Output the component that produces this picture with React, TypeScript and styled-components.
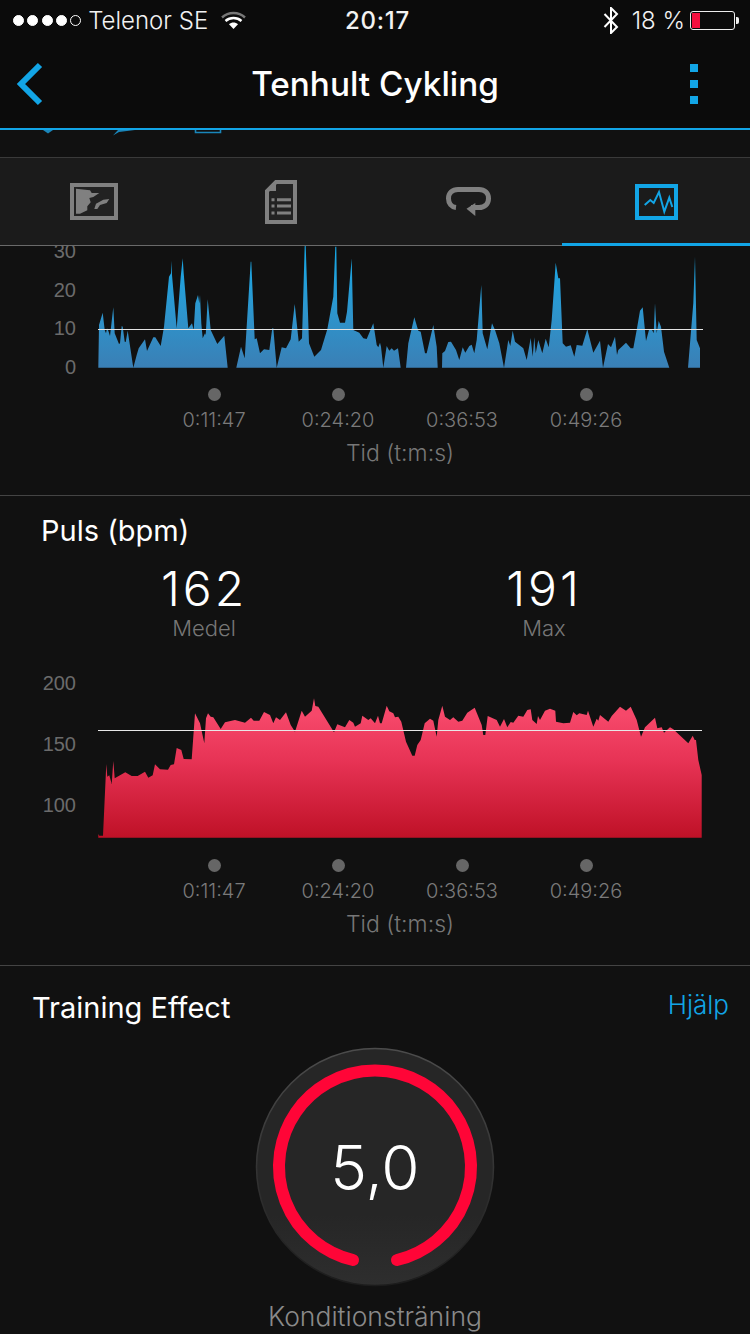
import React from "react";
import styled, { createGlobalStyle } from "styled-components";

const SANS = `"Liberation Sans", Arial, sans-serif`;
const UI = `Inter, "Liberation Sans", sans-serif`;

const Global = createGlobalStyle`
  html, body { margin: 0; padding: 0; background: #111; }
  body { font-family: ${UI}; }
  #root { width: 750px; height: 1334px; overflow: hidden; }
`;

const Page = styled.div`
  width: 750px;
  height: 1334px;
  overflow: hidden;
  background: #111;
  color: #fff;
`;

const Header = styled.header`
  height: 128px;
  background: #0b0b0b;
  border-bottom: 2px solid #12a5e6;
`;

const StatusBar = styled.div`
  height: 40px;
  display: grid;
  grid-template-columns: 1fr auto 1fr;
  align-items: center;
  padding: 0 11px 0 13px;
  font-size: 24px;
  color: #f2f2f2;
`;

const StatusLeft = styled.div`
  display: flex;
  align-items: center;
`;

const StatusRight = styled.div`
  display: flex;
  align-items: center;
  justify-content: flex-end;
`;

const Signal = styled.div`
  display: flex;
  gap: 3.3px;
  margin-right: 7px;
`;

const Dot = styled.span<{ $off?: boolean }>`
  width: 11px;
  height: 11px;
  box-sizing: border-box;
  border-radius: 50%;
  border: 1px solid #fff;
  background: ${(p) => (p.$off ? "transparent" : "#fff")};
`;

const Carrier = styled.span`
  margin-right: 13px;
  font-weight: 300;
`;

const Clock = styled.span`
  font-weight: 500;
  letter-spacing: 0.8px;
  margin-left: 3px;
`;

const Percent = styled.span`
  margin: 0 5px 0 13px;
  font-weight: 300;
`;

const Battery = styled.div`
  position: relative;
  width: 45px;
  height: 19px;
  box-sizing: border-box;
  border: 1px solid #eee;
  border-radius: 3px;
  margin-right: 4px;
  padding: 1px;
  &::after {
    content: "";
    position: absolute;
    right: -5px;
    top: 5px;
    width: 3px;
    height: 7px;
    background: #eee;
    border-radius: 0 2px 2px 0;
  }
`;

const BatteryFill = styled.div`
  width: 8px;
  height: 100%;
  background: #f5103f;
`;

const NavBar = styled.div`
  height: 88px;
  display: grid;
  grid-template-columns: 100px 1fr 100px;
  align-items: center;
`;

const BackIcon = styled.svg`
  margin-left: 15px;
  display: block;
`;

const Title = styled.h1`
  margin: 0;
  text-align: center;
  font-size: 33.3px;
  font-weight: 500;
`;

const Kebab = styled.div`
  justify-self: end;
  margin-right: 52px;
  display: flex;
  flex-direction: column;
  gap: 8px;
`;

const KebabDot = styled.span`
  width: 8px;
  height: 8px;
  background: #12a5e6;
`;

const ScrolledStrip = styled.svg`
  display: block;
  height: 27px;
  width: 750px;
`;

const Tabs = styled.nav`
  height: 87px;
  display: grid;
  grid-template-columns: repeat(4, 1fr);
  background: #1b1b1b;
  border-top: 1px solid #3a3a3a;
  border-bottom: 1px solid #6a6a6a;
`;

const Tab = styled.div<{ $active?: boolean }>`
  display: flex;
  align-items: center;
  justify-content: center;
  position: relative;
  ${(p) =>
    p.$active
      ? `&::after { content: ""; position: absolute; left: -1px; right: 0; bottom: -1px; height: 3px; background: #12a5e6; }`
      : ""}
`;

const Section = styled.section<{ $height: number }>`
  height: ${(p) => p.$height}px;
  box-sizing: border-box;
  border-bottom: 1px solid #444;
  overflow: hidden;
`;

const ChartRow = styled.div`
  display: flex;
  align-items: flex-start;
`;

const YAxis = styled.div<{ $height: number; $top: number }>`
  width: 76px;
  height: ${(p) => p.$height}px;
  margin-top: ${(p) => p.$top}px;
  margin-right: 22px;
  display: flex;
  flex-direction: column;
  justify-content: space-between;
  align-items: flex-end;
  font-family: ${SANS};
  font-size: 20px;
  line-height: 20px;
  color: #6b6b6b;
`;

const Plot = styled.svg`
  display: block;
`;

const Ticks = styled.div<{ $top: number }>`
  display: grid;
  grid-template-columns: repeat(4, 124px);
  padding-left: 152px;
  margin-top: ${(p) => p.$top}px;
`;

const Tick = styled.div`
  display: flex;
  flex-direction: column;
  align-items: center;
  font-weight: 300;
  font-size: 20px;
  line-height: 24px;
  color: #7a7a7a;
`;

const TickDot = styled.span`
  width: 13px;
  height: 13px;
  border-radius: 50%;
  background: #666;
  margin-bottom: 7px;
`;

const AxisTitle = styled.div`
  margin-top: 8px;
  padding-left: 50px;
  text-align: center;
  font-size: 23px;
  font-weight: 300;
  line-height: 26px;
  color: #777;
`;

const SectionTitle = styled.h2<{ $left: number }>`
  margin: 0;
  padding-left: ${(p) => p.$left}px;
  font-size: 29px;
  font-weight: 400;
  color: #fff;
`;

const PulsHead = styled.div`
  padding-top: 17px;
  height: 174px;
  box-sizing: border-box;
`;

const Stats = styled.div`
  display: grid;
  grid-template-columns: 340px 340px;
  padding-left: 34px;
  margin-top: 14px;
`;

const Stat = styled.div`
  text-align: center;
`;

const StatValue = styled.div`
  font-weight: 300;
  font-size: 48px;
  letter-spacing: 3px;
  line-height: 54px;
`;

const StatLabel = styled.div`
  font-size: 22px;
  font-weight: 300;
  line-height: 24px;
  color: #777;
`;

const TrainingHead = styled.div`
  display: flex;
  justify-content: space-between;
  align-items: flex-start;
  padding: 24px 21px 0 0;
`;

const Help = styled.span`
  font-size: 26px;
  font-weight: 300;
  color: #12a5e6;
  margin-top: -1px;
`;

const GaugeWrap = styled.div`
  position: relative;
  width: 240px;
  height: 240px;
  margin: 22px auto 0;
  display: flex;
  align-items: center;
  justify-content: center;
`;

const GaugeSvg = styled.svg`
  position: absolute;
  inset: 0;
`;

const GaugeValue = styled.span`
  position: relative;
  font-weight: 300;
  font-size: 62px;
`;

const GaugeLabel = styled.div`
  margin-top: 13px;
  text-align: center;
  font-size: 26.5px;
  font-weight: 300;
  color: #8a8a8a;
`;

type P = [number, number];

const blueA: P[] = [[175,383],[177,255],[188,218],[194,270],[198,280],[201,265],[205,272],[210,288],[220,202],[224,280],[237,312],[240,310],[245,258],[248,260],[254,305],[257,306],[263,272],[280,383],[290,345],[296,325],[315,298],[321,333],[340,292],[346,292],[362,318],[372,260],[387,110],[393,100],[395,62],[396,105],[410,265],[422,110],[428,55],[431,100],[445,265],[456,250],[461,270],[466,190],[474,165],[478,190],[480,165],[484,250],[488,295],[495,280],[497,285],[503,178],[512,270],[532,312],[553,287],[563,383],[589,383],[603,320],[614,355],[632,65],[634,65],[644,298],[650,295],[660,340],[672,328],[688,330],[697,265],[700,265],[710,383],[725,322],[738,325],[752,298],[764,192],[776,305],[786,295],[794,18],[797,18],[807,310],[823,350],[843,330],[862,268],[880,170],[886,20],[889,20],[892,220],[900,248],[915,248],[921,215],[935,55],[940,270],[958,278],[970,295],[980,297],[1000,250],[1010,315],[1015,322]];
const blueB: P[] = [[0,308],[3,320],[10,383],[20,318],[28,332],[35,325],[42,332],[54,325],[62,383],[78,383],[85,310],[103,232],[115,272],[122,275],[135,340],[140,340],[160,255],[170,320],[173,383],[186,383],[187,340],[195,333],[205,306],[213,305],[228,330],[238,360],[248,322],[256,338],[268,318],[275,314],[283,340],[290,300],[304,135],[308,280],[322,328],[336,250],[345,270],[358,310],[372,383],[385,300],[391,318],[398,272],[405,305],[430,325],[440,360],[452,294],[458,350],[463,292],[467,340],[475,300],[487,340],[497,296],[506,322],[515,240],[527,68],[535,115],[540,115],[548,310],[558,320],[572,316],[583,350],[590,315],[607,317],[622,268],[640,338],[660,302],[669,383],[684,312],[693,322],[705,290],[711,345],[715,330],[738,308],[752,325],[760,325],[770,270],[780,212],[788,202],[798,303],[807,270],[815,268],[821,280],[825,190],[830,280],[836,243],[843,260],[852,335],[868,383],[924,383],[940,190],[945,50],[950,300],[960,325],[960,383]];
const redA: P[] = [[175,503],[175,492],[178,497],[189,497],[199,282],[202,320],[208,316],[215,342],[220,273],[224,325],[256,307],[275,318],[293,318],[315,305],[325,323],[338,316],[345,283],[360,298],[384,299],[392,285],[402,283],[410,234],[424,240],[431,267],[455,268],[465,130],[480,160],[493,220],[498,145],[504,130],[512,140],[520,142],[542,177],[555,157],[585,150],[615,158],[633,143],[641,152],[658,152],[672,126],[690,135],[700,160],[708,142],[720,150],[738,127],[752,165],[765,185],[785,122],[795,140],[815,122],[822,85],[826,108],[835,110],[882,187],[892,163],[915,172],[928,150],[940,158],[945,170],[962,160],[967,137],[985,150],[992,145],[1005,160],[1014,137],[1020,160]];
const redB: P[] = [[5,160],[20,107],[28,124],[40,130],[45,142],[55,140],[64,155],[78,215],[97,257],[104,257],[112,225],[122,210],[134,160],[150,146],[160,152],[170,200],[175,150],[187,107],[195,140],[210,150],[220,142],[235,155],[247,152],[262,128],[284,113],[305,165],[310,195],[316,195],[323,138],[350,150],[360,170],[372,147],[382,172],[392,156],[400,158],[415,137],[430,140],[442,120],[452,118],[457,150],[470,162],[474,138],[480,150],[495,122],[510,116],[526,122],[528,155],[550,160],[570,158],[580,126],[590,136],[598,130],[620,135],[624,122],[640,170],[650,146],[655,152],[660,135],[685,155],[695,138],[720,110],[738,122],[752,110],[770,150],[783,200],[795,172],[825,143],[832,175],[845,172],[852,188],[870,172],[880,178],[925,220],[938,197],[944,210],[948,210],[955,270],[965,315],[965,503]];

const toPath = (a: P[], b: P[], originY: number, plotTop: number) => {
  const pts = [
    ...a.map(([x, y]): P => [x / 3 + 40 - 98, y / 3 + originY - plotTop]),
    ...b.map(([x, y]): P => [x / 3 + 380 - 98, y / 3 + originY - plotTop]),
  ];
  return "M" + pts.map(([x, y]) => `${x.toFixed(1)} ${y.toFixed(1)}`).join("L") + "Z";
};

const bluePath = toPath(blueA, blueB, 240, 246);
const redPath = toPath(redA, redB, 670, 670);
const TIMES = ["0:11:47", "0:24:20", "0:36:53", "0:49:26"];

const TimeAxis = ({ top }: { top: number }) => (
  <>
    <Ticks $top={top}>
      {TIMES.map((t) => (
        <Tick key={t}>
          <TickDot />
          {t}
        </Tick>
      ))}
    </Ticks>
    <AxisTitle>Tid (t:m:s)</AxisTitle>
  </>
);

export default function App() {
  return (
    <Page>
      <Global />
      <Header>
        <StatusBar>
          <StatusLeft>
            <Signal>
              <Dot />
              <Dot />
              <Dot />
              <Dot />
              <Dot $off />
            </Signal>
            <Carrier>Telenor SE</Carrier>
            <svg width="25" height="18" viewBox="0 0 25 18">
              <path d="M1 6.5C7.5 .5 17.5 .5 24 6.5" fill="none" stroke="#777" strokeWidth="2.4" />
              <path d="M4.5 10C9 6 16 6 20.5 10" fill="none" stroke="#fff" strokeWidth="2.4" />
              <path d="M8 13.2C10.6 11 14.4 11 17 13.2L12.5 18Z" fill="#fff" />
            </svg>
          </StatusLeft>
          <Clock>20:17</Clock>
          <StatusRight>
            <svg width="16" height="27" viewBox="0 0 16 27">
              <path d="M1.5 7L14 20L8 26V1L14 7L1.5 20" fill="none" stroke="#fff" strokeWidth="2" />
            </svg>
            <Percent>18 %</Percent>
            <Battery>
              <BatteryFill />
            </Battery>
          </StatusRight>
        </StatusBar>
        <NavBar>
          <BackIcon width="30" height="46" viewBox="0 0 30 46">
            <path d="M25 4L6 23L25 42" fill="none" stroke="#12a5e6" strokeWidth="6" />
          </BackIcon>
          <Title>Tenhult Cykling</Title>
          <Kebab>
            <KebabDot />
            <KebabDot />
            <KebabDot />
          </Kebab>
        </NavBar>
      </Header>

      <ScrolledStrip viewBox="0 0 750 27">
        <path d="M43 0L48 3.5L53 0Z" fill="#1a86ba" />
        <path d="M113 5.5L118 0H135L119 2Z" fill="#1a86ba" />
        <path d="M195.5 0V2.5H220.5V0" fill="none" stroke="#1a86ba" strokeWidth="1.6" />
      </ScrolledStrip>

      <Tabs>
        <Tab>
          <svg width="48" height="37" viewBox="0 0 48 37">
            <rect x="2" y="2" width="44" height="33" fill="#222" stroke="#808080" strokeWidth="4" />
            <path d="M6 5.7L20 7.3L21.7 10H29.3L23.3 14L19.3 15L20.7 19.3L17.3 23.3V27.3L10 30.7H6Z" fill="#808080" />
            <path d="M24.3 26L26 20.7L33.3 16.7L39.3 16L36.7 20L30 22L27.3 26Z" fill="#808080" />
          </svg>
        </Tab>
        <Tab>
          <svg width="32" height="44" viewBox="0 0 32 44">
            <path d="M11 2H30V42H2V11Z" fill="#222" stroke="#808080" strokeWidth="4" />
            <path d="M11 1V11H1Z" fill="#808080" />
            <path d="M12 19.7H26M12 26H26M12 33H26" stroke="#808080" strokeWidth="3" />
            <path d="M6.5 19.7H9.5M6.5 26H9.5M6.5 33H9.5" stroke="#808080" strokeWidth="3" />
          </svg>
        </Tab>
        <Tab>
          <svg width="46" height="31" viewBox="0 0 46 31">
            <path d="M10 21.5C5.5 21 2.5 17.5 2.5 12.5C2.5 7 6.5 3.5 12 3.5H33C38.5 3.5 42.5 7 42.5 12.5C42.5 18 38.5 21.5 33 21.5H25" fill="none" stroke="#808080" strokeWidth="5" />
            <path d="M20.5 22.7L29.3 17V30Z" fill="#808080" />
          </svg>
        </Tab>
        <Tab $active>
          <svg width="43" height="36" viewBox="0 0 43 36">
            <rect x="2" y="2" width="39" height="32" fill="none" stroke="#12a5e6" strokeWidth="4" />
            <path d="M9.7 21L15.3 16L18.7 19L24 8L29.3 27.7L34.3 13.7L37.3 23" fill="none" stroke="#12a5e6" strokeWidth="2" />
          </svg>
        </Tab>
      </Tabs>

      <Section $height={250}>
        <ChartRow>
          <YAxis $height={136} $top={-5}>
            <span>30</span>
            <span>20</span>
            <span>10</span>
            <span>0</span>
          </YAxis>
          <Plot width="606" height="122" viewBox="0 0 606 122">
            <defs>
              <linearGradient id="blueFill" x1="0" y1="0" x2="0" y2="1">
                <stop offset="0" stopColor="#15a9e8" />
                <stop offset="0.5" stopColor="#2c97cf" />
                <stop offset="1" stopColor="#3a7fb5" />
              </linearGradient>
            </defs>
            <path d={bluePath} fill="url(#blueFill)" />
            <path d="M0 83.5H605" stroke="#e4e4e4" strokeWidth="1" />
          </Plot>
        </ChartRow>
        <TimeAxis top={11} />
      </Section>

      <Section $height={470}>
        <PulsHead>
          <SectionTitle $left={41}>Puls (bpm)</SectionTitle>
          <Stats>
            <Stat>
              <StatValue>162</StatValue>
              <StatLabel>Medel</StatLabel>
            </Stat>
            <Stat>
              <StatValue>191</StatValue>
              <StatLabel>Max</StatLabel>
            </Stat>
          </Stats>
        </PulsHead>
        <ChartRow>
          <YAxis $height={142} $top={3}>
            <span>200</span>
            <span>150</span>
            <span>100</span>
          </YAxis>
          <Plot width="606" height="168" viewBox="0 0 606 168">
            <defs>
              <linearGradient id="redFill" x1="0" y1="0" x2="0" y2="1">
                <stop offset="0.12" stopColor="#f6486a" />
                <stop offset="0.45" stopColor="#e73355" />
                <stop offset="1" stopColor="#bf1127" />
              </linearGradient>
            </defs>
            <path d={redPath} fill="url(#redFill)" />
            <path d="M0 60.5H604" stroke="#e8e8e8" strokeWidth="1" />
          </Plot>
        </ChartRow>
        <TimeAxis top={21} />
      </Section>

      <TrainingHead>
        <SectionTitle $left={32}>Training Effect</SectionTitle>
        <Help>Hjälp</Help>
      </TrainingHead>
      <GaugeWrap>
        <GaugeSvg width="240" height="240" viewBox="0 0 240 240">
          <defs>
            <linearGradient id="rim" x1="0" y1="0" x2="0" y2="1">
              <stop offset="0" stopColor="#4c4c4c" />
              <stop offset="1" stopColor="#1c1c1c" />
            </linearGradient>
            <linearGradient id="disc" x1="0" y1="0" x2="0" y2="1">
              <stop offset="0.7" stopColor="#262626" />
              <stop offset="1" stopColor="#2e2e2e" />
            </linearGradient>
          </defs>
          <circle cx="120" cy="120" r="118.5" fill="url(#disc)" stroke="url(#rim)" strokeWidth="1.5" />
          <path d="M98 213A96 96 0 1 1 142 213" fill="none" stroke="#ff0537" strokeWidth="12" strokeLinecap="round" />
        </GaugeSvg>
        <GaugeValue>5,0</GaugeValue>
      </GaugeWrap>
      <GaugeLabel>Konditionsträning</GaugeLabel>
    </Page>
  );
}
